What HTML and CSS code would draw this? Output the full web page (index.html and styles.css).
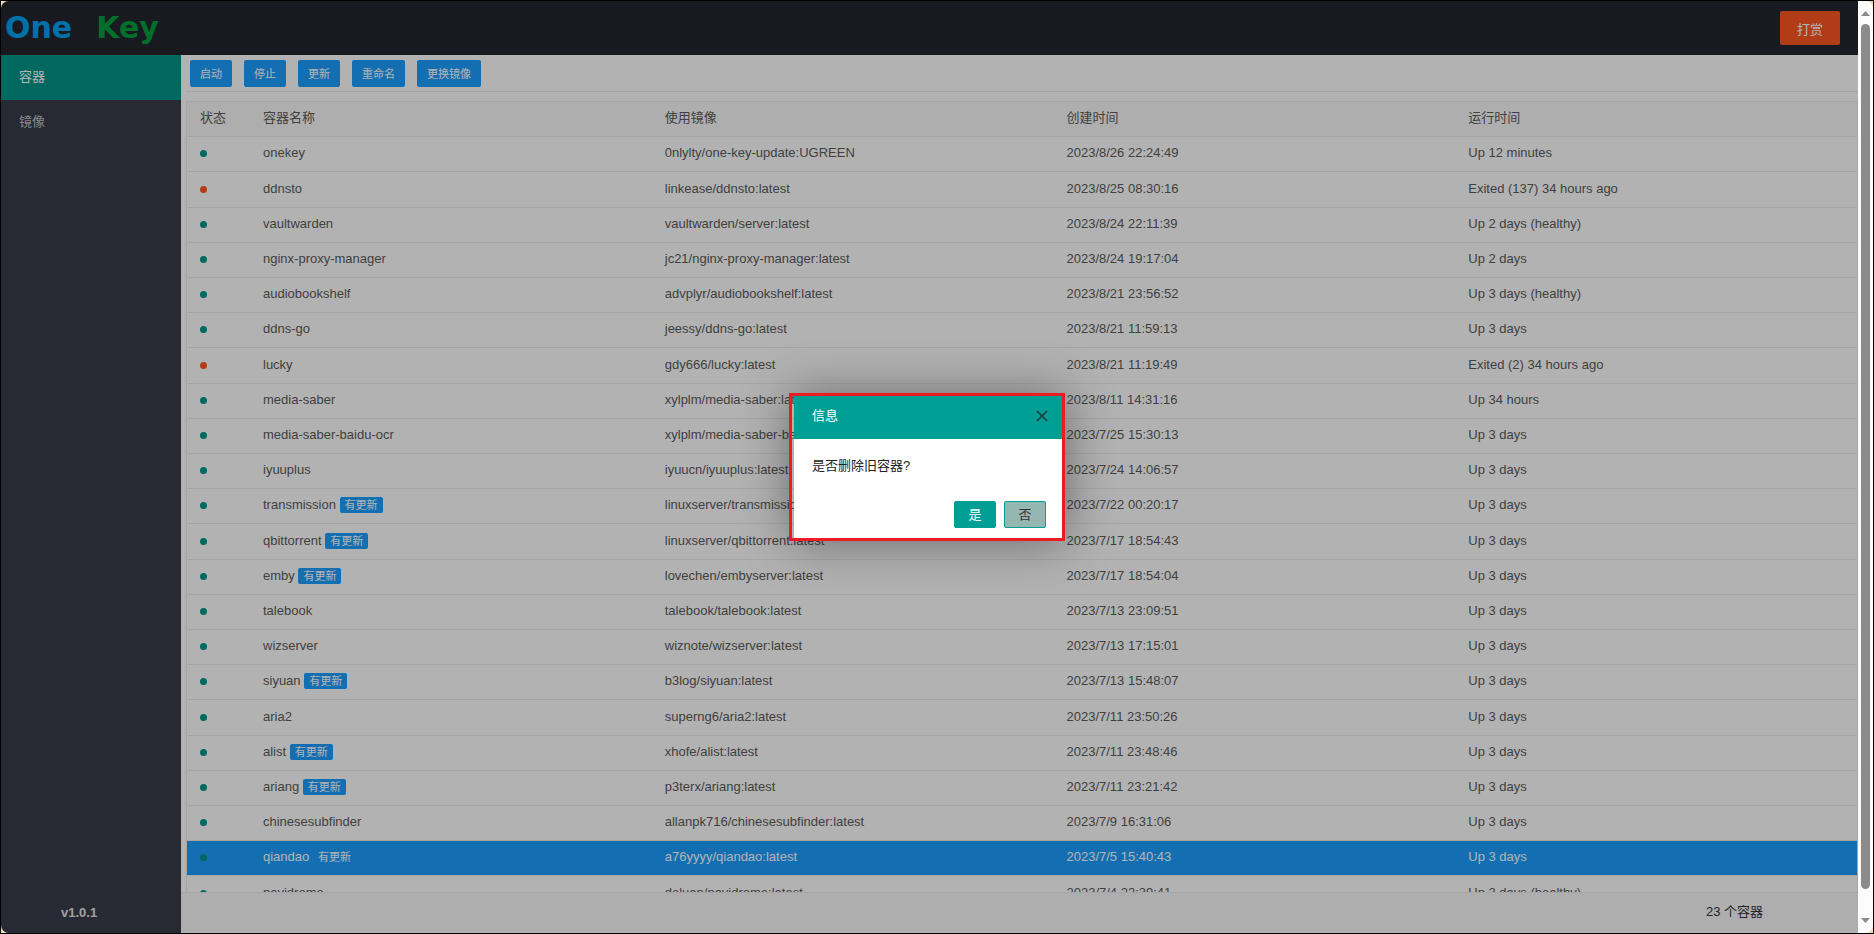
FILE: index.html
```html
<!DOCTYPE html>
<html lang="zh-CN">
<head>
<meta charset="utf-8">
<title>One Key</title>
<link rel="stylesheet" href="styles.css">
</head>
<body>
<div class="window">
  <div class="app">
    <header class="header">
      <div class="logo"><span class="logo-one">One</span><span class="logo-key">Key</span></div>
      <button class="btn btn-danger" type="button">打赏</button>
    </header>
    <div class="body">
      <aside class="side">
        <nav class="nav">
          <a class="nav-item active" href="#containers">容器</a>
          <a class="nav-item" href="#images">镜像</a>
        </nav>
        <div class="version">v1.0.1</div>
      </aside>
      <div class="content">
        <main class="main">
          <div class="toolbar">
            <button class="btn btn-small" type="button">启动</button>
            <button class="btn btn-small" type="button">停止</button>
            <button class="btn btn-small" type="button">更新</button>
            <button class="btn btn-small" type="button">重命名</button>
            <button class="btn btn-small" type="button">更换镜像</button>
          </div>
          <div class="table-view">
            <table class="table">
              <thead>
                <tr><th class="col-state">状态</th><th>容器名称</th><th>使用镜像</th><th>创建时间</th><th>运行时间</th></tr>
              </thead>
              <tbody>
                <tr><td><span class="dot"></span></td><td>onekey</td><td>0nlylty/one-key-update:UGREEN</td><td>2023/8/26 22:24:49</td><td>Up 12 minutes</td></tr>
                <tr><td><span class="dot dot-off"></span></td><td>ddnsto</td><td>linkease/ddnsto:latest</td><td>2023/8/25 08:30:16</td><td>Exited (137) 34 hours ago</td></tr>
                <tr><td><span class="dot"></span></td><td>vaultwarden</td><td>vaultwarden/server:latest</td><td>2023/8/24 22:11:39</td><td>Up 2 days (healthy)</td></tr>
                <tr><td><span class="dot"></span></td><td>nginx-proxy-manager</td><td>jc21/nginx-proxy-manager:latest</td><td>2023/8/24 19:17:04</td><td>Up 2 days</td></tr>
                <tr><td><span class="dot"></span></td><td>audiobookshelf</td><td>advplyr/audiobookshelf:latest</td><td>2023/8/21 23:56:52</td><td>Up 3 days (healthy)</td></tr>
                <tr><td><span class="dot"></span></td><td>ddns-go</td><td>jeessy/ddns-go:latest</td><td>2023/8/21 11:59:13</td><td>Up 3 days</td></tr>
                <tr><td><span class="dot dot-off"></span></td><td>lucky</td><td>gdy666/lucky:latest</td><td>2023/8/21 11:19:49</td><td>Exited (2) 34 hours ago</td></tr>
                <tr><td><span class="dot"></span></td><td>media-saber</td><td>xylplm/media-saber:latest</td><td>2023/8/11 14:31:16</td><td>Up 34 hours</td></tr>
                <tr><td><span class="dot"></span></td><td>media-saber-baidu-ocr</td><td>xylplm/media-saber-baidu-ocr:latest</td><td>2023/7/25 15:30:13</td><td>Up 3 days</td></tr>
                <tr><td><span class="dot"></span></td><td>iyuuplus</td><td>iyuucn/iyuuplus:latest</td><td>2023/7/24 14:06:57</td><td>Up 3 days</td></tr>
                <tr><td><span class="dot"></span></td><td>transmission <span class="badge">有更新</span></td><td>linuxserver/transmission:latest</td><td>2023/7/22 00:20:17</td><td>Up 3 days</td></tr>
                <tr><td><span class="dot"></span></td><td>qbittorrent <span class="badge">有更新</span></td><td>linuxserver/qbittorrent:latest</td><td>2023/7/17 18:54:43</td><td>Up 3 days</td></tr>
                <tr><td><span class="dot"></span></td><td>emby <span class="badge">有更新</span></td><td>lovechen/embyserver:latest</td><td>2023/7/17 18:54:04</td><td>Up 3 days</td></tr>
                <tr><td><span class="dot"></span></td><td>talebook</td><td>talebook/talebook:latest</td><td>2023/7/13 23:09:51</td><td>Up 3 days</td></tr>
                <tr><td><span class="dot"></span></td><td>wizserver</td><td>wiznote/wizserver:latest</td><td>2023/7/13 17:15:01</td><td>Up 3 days</td></tr>
                <tr><td><span class="dot"></span></td><td>siyuan <span class="badge">有更新</span></td><td>b3log/siyuan:latest</td><td>2023/7/13 15:48:07</td><td>Up 3 days</td></tr>
                <tr><td><span class="dot"></span></td><td>aria2</td><td>superng6/aria2:latest</td><td>2023/7/11 23:50:26</td><td>Up 3 days</td></tr>
                <tr><td><span class="dot"></span></td><td>alist <span class="badge">有更新</span></td><td>xhofe/alist:latest</td><td>2023/7/11 23:48:46</td><td>Up 3 days</td></tr>
                <tr><td><span class="dot"></span></td><td>ariang <span class="badge">有更新</span></td><td>p3terx/ariang:latest</td><td>2023/7/11 23:21:42</td><td>Up 3 days</td></tr>
                <tr><td><span class="dot"></span></td><td>chinesesubfinder</td><td>allanpk716/chinesesubfinder:latest</td><td>2023/7/9 16:31:06</td><td>Up 3 days</td></tr>
                <tr class="selected"><td><span class="dot"></span></td><td>qiandao <span class="badge">有更新</span></td><td>a76yyyy/qiandao:latest</td><td>2023/7/5 15:40:43</td><td>Up 3 days</td></tr>
                <tr><td><span class="dot"></span></td><td>navidrome</td><td>deluan/navidrome:latest</td><td>2023/7/4 22:39:41</td><td>Up 3 days (healthy)</td></tr>
              </tbody>
            </table>
          </div>
        </main>
        <footer class="footer">23 个容器</footer>
      </div>
    </div>
    <div class="shade">
      <div class="frame">
        <div class="dialog" role="dialog" aria-labelledby="dialog-title">
          <div class="dialog-head">
            <span id="dialog-title">信息</span>
            <button class="close" type="button" aria-label="关闭">
              <svg width="12" height="12" viewBox="0 0 12 12"><path d="M1 1L11 11M11 1L1 11" fill="none" stroke="#1f3d3f" stroke-width="1.7"/></svg>
            </button>
          </div>
          <div class="dialog-text">是否删除旧容器?</div>
          <div class="dialog-actions">
            <button class="choice choice-yes" type="button">是</button>
            <button class="choice" type="button">否</button>
          </div>
        </div>
      </div>
    </div>
  </div>
  <div class="scrollbar" aria-hidden="true">
    <svg width="9" height="5" viewBox="0 0 9 5"><path d="M4.5 0L9 5H0Z" fill="#8b8b8b"/></svg>
    <div class="thumb"></div>
    <svg width="9" height="5" viewBox="0 0 9 5"><path d="M0 0H9L4.5 5Z" fill="#8b8b8b"/></svg>
  </div>
</div>
</body>
</html>
```

FILE: styles.css
```css
* {
  box-sizing: border-box;
}

body {
  margin: 0;
  height: 100vh;
  overflow: hidden;
  border: 1px solid #000;
  background: #f0dcb8;
  font: 13px/20px "Liberation Sans", Arial, "Noto Sans CJK SC", sans-serif;
  color: #333;
}

button {
  font-family: inherit;
  cursor: pointer;
}

.window {
  display: flex;
  height: 100%;
  border-radius: 8px;
  overflow: hidden;
}

.app {
  position: relative;
  flex: 1;
  min-width: 0;
  display: flex;
  flex-direction: column;
}

.header {
  height: 54px;
  flex: none;
  display: flex;
  align-items: center;
  justify-content: space-between;
  padding: 0 18px 0 4px;
  background: #23262e;
}

.logo {
  display: flex;
  gap: 24px;
  font: bold 30px/54px "DejaVu Sans", sans-serif;
}

.logo-one {
  color: #00a1f3;
}

.logo-key {
  color: #00a040;
}

.btn {
  border: 0;
  border-radius: 2px;
  color: #fff;
}

.btn-danger {
  height: 34px;
  padding: 0 17px;
  background: #ff5722;
  font-size: 13px;
}

.btn-small {
  height: 27px;
  padding: 0 10px 1px;
  background: #1e9fff;
  font-size: 11px;
}

.body {
  flex: 1;
  min-height: 0;
  display: flex;
}

.side {
  width: 180px;
  flex: none;
  display: flex;
  flex-direction: column;
  justify-content: space-between;
  background: #393d49;
}

.nav {
  display: flex;
  flex-direction: column;
}

.nav-item {
  padding: 0 18px 2px;
  line-height: 43px;
  color: rgba(255, 255, 255, 0.7);
  text-decoration: none;
}

.nav-item.active {
  background: #009688;
  color: #fff;
}

.version {
  padding: 0 60px;
  line-height: 41px;
  font-weight: bold;
  color: #e6e6e6;
}

.content {
  flex: 1;
  min-width: 0;
  display: flex;
  flex-direction: column;
  background: #fff;
}

.main {
  flex: 1;
  min-height: 0;
  display: flex;
  flex-direction: column;
  gap: 9px;
  padding-left: 5px;
}

.toolbar {
  display: flex;
  gap: 12px;
  padding: 5px 4px 4px;
  border-bottom: 1px solid #eee;
}

.table-view {
  flex: 1;
  min-height: 0;
  overflow: hidden;
  border: 1px solid #eee;
  border-bottom: 0;
}

.table {
  width: 100%;
  table-layout: fixed;
  border-spacing: 0;
  color: #5c5c5c;
}

.table th,
.table td {
  height: 35px;
  padding: 0 13px 2px;
  border-bottom: 1px solid #eee;
  text-align: left;
  font-weight: normal;
  white-space: nowrap;
}

.table tbody tr:nth-child(5n + 2) td {
  height: 36px;
}

.table th {
  background: #fafafa;
}

.table .col-state {
  width: 63px;
}

.table .selected td {
  background: #1e9fff;
  color: #fff;
}

.dot {
  display: inline-block;
  width: 7px;
  height: 7px;
  border-radius: 50%;
  background: #009688;
}

.dot-off {
  background: #ff5722;
}

.badge {
  display: inline-block;
  padding: 0 5px;
  border-radius: 2px;
  background: #1e9fff;
  color: #fff;
  font-size: 11px;
  line-height: 16px;
}

.footer {
  flex: none;
  padding: 0 95px 2px;
  border-top: 1px solid #eee;
  background: #fafafa;
  line-height: 38px;
  text-align: right;
}

.shade {
  position: absolute;
  inset: 0;
  display: flex;
  align-items: center;
  justify-content: center;
  padding-right: 5px;
  background: rgba(0, 0, 0, 0.3);
}

.frame {
  padding-left: 2px;
  border: 3px solid #ed1c24;
  box-shadow: 1px 1px 50px rgba(0, 0, 0, 0.4);
}

.dialog {
  width: 268px;
  background: #fff;
}

.dialog-head {
  display: flex;
  align-items: center;
  justify-content: space-between;
  height: 43px;
  padding: 0 14px 4px 18px;
  background: #009f95;
  color: #fff;
}

.close {
  display: flex;
  padding: 0;
  border: 0;
  background: none;
}

.dialog-text {
  padding: 17px 18px 25px;
  color: #222;
}

.dialog-actions {
  display: flex;
  justify-content: flex-end;
  gap: 8px;
  padding: 0 16px 10px;
}

.choice {
  width: 42px;
  height: 27px;
  padding: 0 0 3px;
  border: 1px solid #009f95;
  border-radius: 2px;
  background: #94b8b1;
  color: #333;
  font-size: 13px;
}

.choice-yes {
  background: #009f95;
  color: #fff;
}

.scrollbar {
  width: 15px;
  flex: none;
  display: flex;
  flex-direction: column;
  align-items: center;
  gap: 8px;
  padding: 10px 0;
  background: #fcfcfc;
}

.thumb {
  flex: 1;
  width: 9px;
  margin-bottom: 21px;
  border-radius: 5px;
  background: #8b8b8b;
}
```
